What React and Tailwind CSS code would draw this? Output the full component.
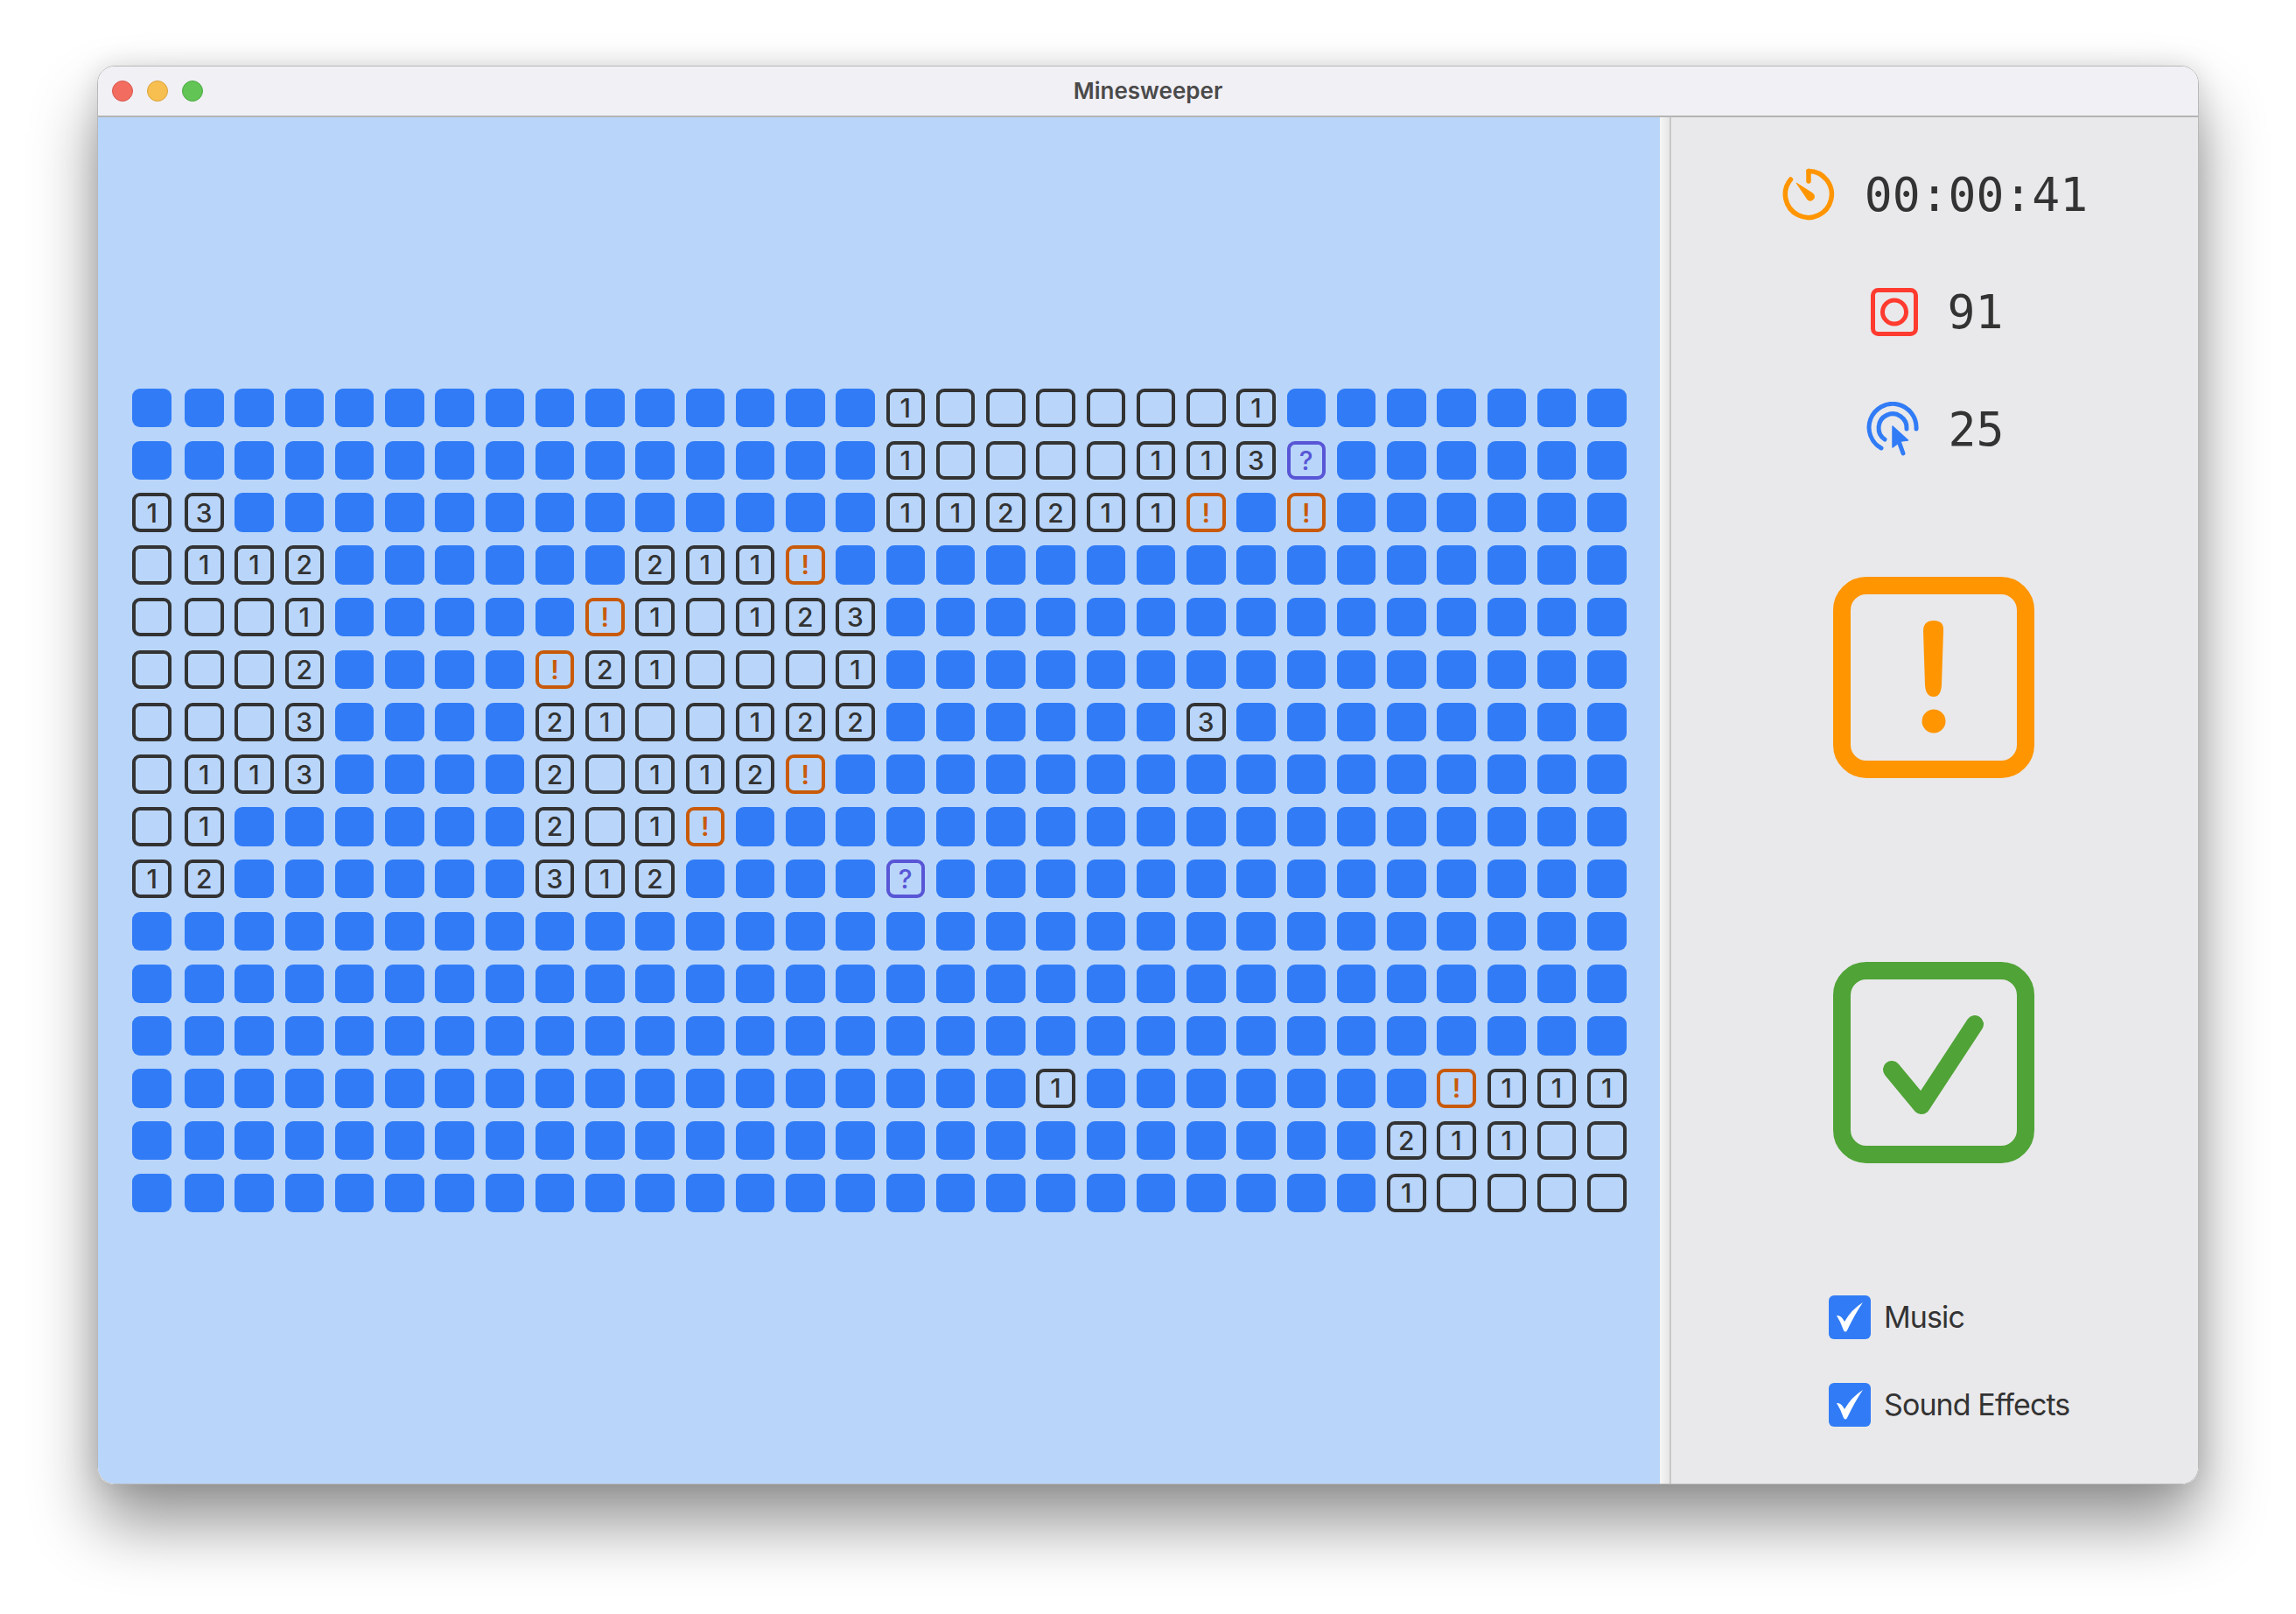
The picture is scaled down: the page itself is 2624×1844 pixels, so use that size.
const boardRows = [
  "...............1______1.......",
  "...............1____113?......",
  "13.............112211!.!......",
  "_112......211!................",
  "___1.....!1_123...............",
  "___2....!21___1...............",
  "___3....21__122......3........",
  "_113....2_112!................",
  "_1......2_1!..................",
  "12......312....?..............",
  "..............................",
  "..............................",
  "..............................",
  "..................1.......!111",
  ".........................211__",
  ".........................1____",
];

function Cell({value}) {
  if (value === ".") {
    return <div className="h-[44.5px] w-[44.5px] rounded-[9px] bg-[#317cf6]"/>;
  }
  let color = "border-[#333333] text-[#333333] font-medium";
  if (value === "!") color = "border-[#c85a0a] text-[#c85a0a] font-semibold";
  if (value === "?") color = "border-[#5856d6] text-[#5856d6] font-medium";
  return (
    <div className={`flex h-[44.5px] w-[44.5px] items-center justify-center rounded-[9px] border-[4px] text-[30px] leading-none font-['Inter',sans-serif] ${color}`}>
      {value === "_" ? "" : value}
    </div>
  );
}

function TimerIcon() {
  return (
    <svg width="60" height="60" viewBox="0 0 60 60" fill="none">
      <path d="M30 3.5 A26.5 26.5 0 1 1 9.5 13" stroke="#ff9500" strokeWidth="5.5" strokeLinecap="round"/>
      <path d="M30 3.5 V15" stroke="#ff9500" strokeWidth="5.5" strokeLinecap="round"/>
      <path d="M16 17 L34 28.5 A4.6 4.6 0 1 1 27.5 34 Z" fill="#ff9500" stroke="#ff9500" strokeWidth="1" strokeLinejoin="round"/>
    </svg>
  );
}

function MinesIcon() {
  return (
    <svg width="54" height="55" viewBox="0 0 54 55" fill="none">
      <rect x="2.5" y="2.5" width="49" height="50" rx="6" stroke="#ff3b30" strokeWidth="5"/>
      <circle cx="27" cy="27.5" r="13.5" stroke="#ff3b30" strokeWidth="5"/>
    </svg>
  );
}

function ClickIcon() {
  return (
    <svg width="60" height="62" viewBox="0 0 60 62" fill="none">
      <path d="M57 31 A27 27 0 1 0 17 53" stroke="#317cf6" strokeWidth="5" strokeLinecap="round"/>
      <path d="M46 31 A16 16 0 1 0 21 43" stroke="#317cf6" strokeWidth="5" strokeLinecap="round"/>
      <path d="M30 28 L47.5 44 L39.5 45 L30 52 Z" fill="#317cf6" stroke="#317cf6" strokeWidth="1.5" strokeLinejoin="round"/>
      <path d="M37 45 L42 59" stroke="#317cf6" strokeWidth="5" strokeLinecap="round"/>
    </svg>
  );
}

function StatRow({icon, text, className}) {
  return (
    <div className={`flex items-center justify-center gap-[34px] text-[53px] leading-none text-[#333333] font-['DejaVu_Sans_Mono',monospace] ${className}`}>
      {icon}
      <span>{text}</span>
    </div>
  );
}

function BigButton({color, children, className}) {
  return (
    <svg width="230" height="230" viewBox="0 0 230 230" fill="none" className={className}>
      <rect x="10" y="10" width="210" height="210" rx="28" stroke={color} strokeWidth="20"/>
      {children}
    </svg>
  );
}

function CheckRow({label, className}) {
  return (
    <div className={`flex items-center gap-[15px] ${className}`}>
      <div className="flex h-[50px] w-[48px] shrink-0 items-center justify-center rounded-[6px] bg-[#317cf6]">
        <svg width="32" height="34" viewBox="0 0 32 34" fill="white">
          <path d="M1 15 Q6 14 10 22 Q18 8 31 0 Q22 13 13 32 Q11 35 9 32 Q6 23 1 15 Z"/>
        </svg>
      </div>
      <span className="whitespace-nowrap text-[34px] leading-none tracking-[-0.9px] text-[#333333] font-['Inter',sans-serif]">{label}</span>
    </div>
  );
}

export default function App() {
  return (
    <div className="h-[1844px] w-[2624px] overflow-hidden bg-white pl-[111px] pt-[75px]">
      <div className="flex h-[1621px] w-[2402px] flex-col overflow-hidden rounded-[20px] border border-[#b8b8b8] shadow-[0_45px_75px_rgba(0,0,0,0.42),0_0_30px_rgba(0,0,0,0.12)]">
        {/*title bar*/}
        <div className="relative flex h-[58px] shrink-0 items-center justify-center border-b-2 border-[#b4b4b4] bg-[#f1f0f5] pb-[2px]">
          <div className="absolute left-[16px] top-[16px] flex gap-[16px]">
            <div className="h-[24px] w-[24px] rounded-full border border-[#d8584e] bg-[#f26d60]"/>
            <div className="h-[24px] w-[24px] rounded-full border border-[#dca23e] bg-[#f6bf4f]"/>
            <div className="h-[24px] w-[24px] rounded-full border border-[#4dab45] bg-[#61c454]"/>
          </div>
          <span className="text-[26px] font-semibold text-[#4a4a4a] font-['Inter',sans-serif]">Minesweeper</span>
        </div>

        <div className="flex min-h-0 flex-1">
          {/*board*/}
          <div className="flex w-[1785px] shrink-0 items-center justify-center bg-[#b9d5fa] pl-[1px]">
            <div className="grid grid-cols-[46.8px_repeat(29,44.5px)] gap-x-[12.75px] gap-y-[15.3px]">
              {boardRows.map((row, r) =>
                row.split("").map((value, c) => <Cell key={`${r}-${c}`} value={value}/>)
              )}
            </div>
          </div>

          {/*divider*/}
          <div className="w-[13px] shrink-0 border-r-2 border-[#c8c8c8] bg-gradient-to-r from-[#f6f6f6] to-[#e6e6e6]"/>

          {/*sidebar*/}
          <div className="flex flex-1 flex-col items-center bg-[#e9e9eb]">
            <StatRow className="mt-[58px] ml-[1px]" icon={<TimerIcon/>} text="00:00:41"/>
            <StatRow className="mt-[77px] ml-[5px]" icon={<MinesIcon/>} text="91"/>
            <StatRow className="mt-[75px] ml-[1px]" icon={<ClickIcon/>} text="25"/>

            <BigButton color="#ff9500" className="mt-[138px] mr-[3px]">
              <path d="M103 62 Q103 50 115 50 Q127 50 126 62 L124 124 Q123 137 115 137 Q106 137 105 124 Z" fill="#ff9500"/>
              <circle cx="115" cy="165" r="13.5" fill="#ff9500"/>
            </BigButton>
            <BigButton color="#50a336" className="mt-[210px] mr-[3px]">
              <path d="M67 123 L101 164 L162 71" stroke="#50a336" strokeWidth="20" strokeLinecap="round" strokeLinejoin="round"/>
            </BigButton>

            <div className="mt-[151px] ml-[31px] flex w-[273px] flex-col gap-[50px] self-center">
              <CheckRow label="Music"/>
              <CheckRow label="Sound Effects"/>
            </div>
          </div>
        </div>
      </div>
    </div>
  );
}
